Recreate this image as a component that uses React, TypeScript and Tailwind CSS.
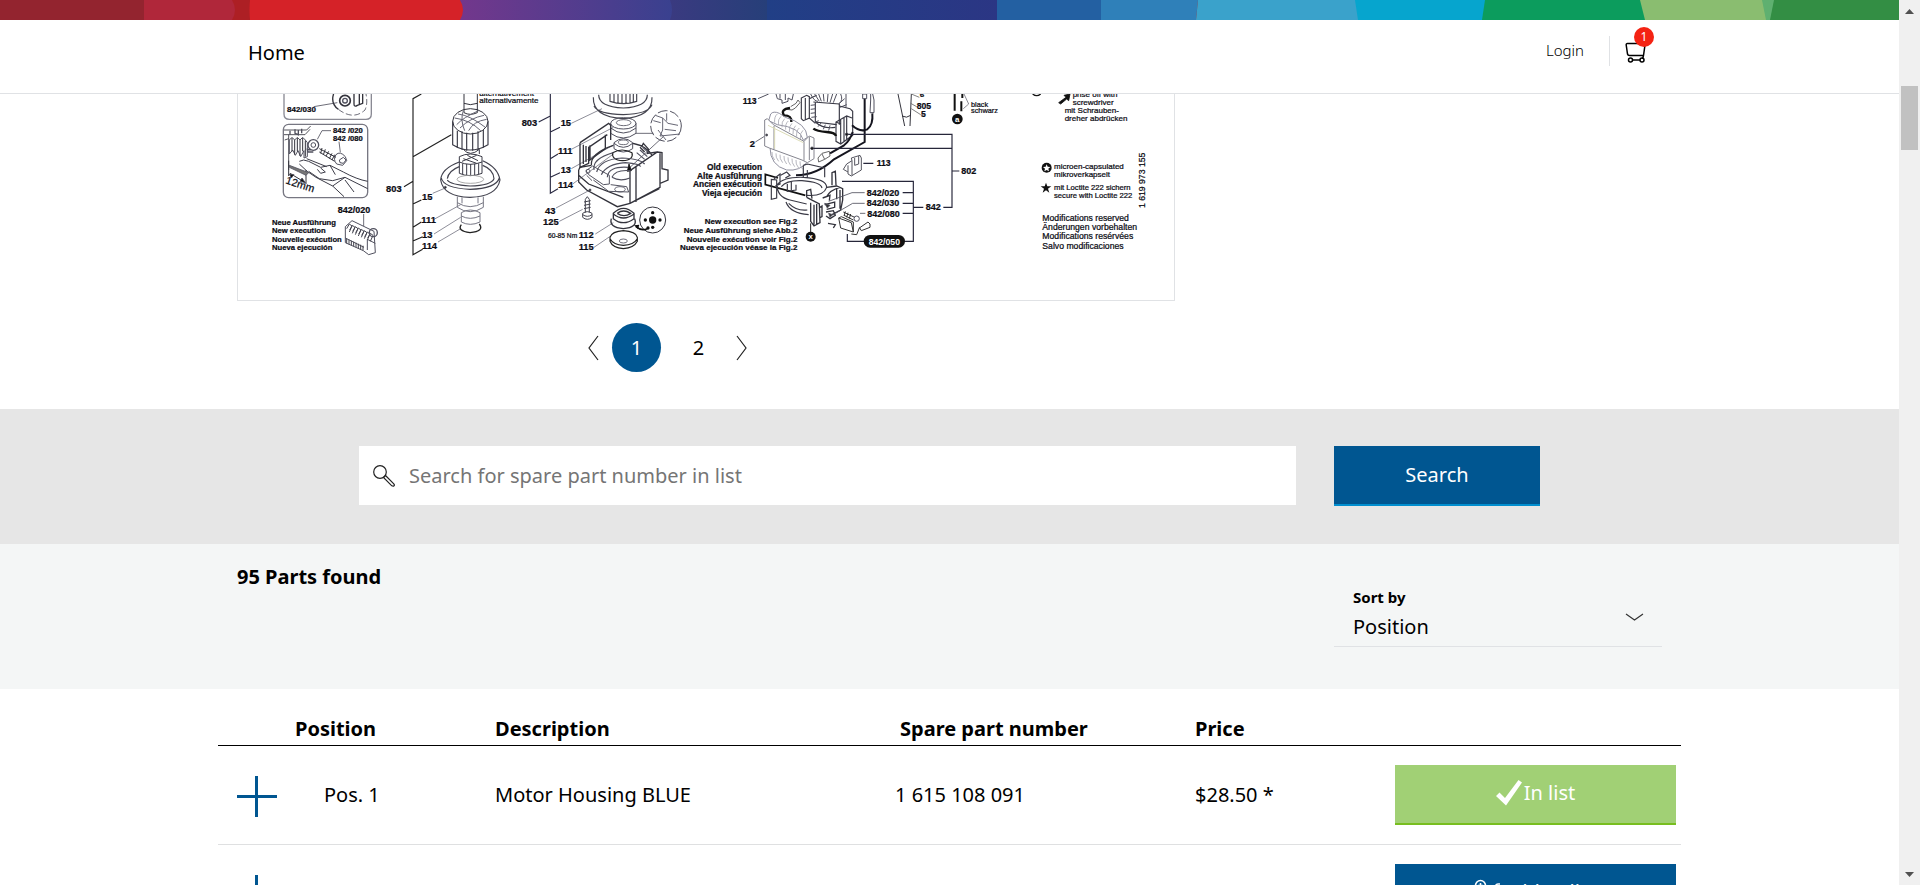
import React from "react";

type Part = {
  position: string;
  description: string;
  number: string;
  price: string;
  inList: boolean;
};

const parts: Part[] = [
  { position: "Pos. 1", description: "Motor Housing BLUE", number: "1 615 108 091", price: "$28.50 *", inList: true },
  { position: "Pos. 2", description: "Rubber", number: "1 614 220 118", price: "$52.10 *", inList: false },
];

function Supergraphic() {
  return (
    <svg className="block h-5 w-full" viewBox="0 0 1899 20" preserveAspectRatio="none" aria-hidden="true">
      <defs>
        <linearGradient id="violet" x1="0" x2="1">
          <stop offset="0" stopColor="#74378c" />
          <stop offset="1" stopColor="#37418f" />
        </linearGradient>
        <linearGradient id="navy" x1="0" x2="1">
          <stop offset="0" stopColor="#3a3a80" />
          <stop offset="1" stopColor="#263f79" />
        </linearGradient>
        <linearGradient id="blue" x1="0" x2="1">
          <stop offset="0" stopColor="#213f86" />
          <stop offset="1" stopColor="#2b3684" />
        </linearGradient>
      </defs>
      <rect width="1899" height="20" fill="#ad1f24" />
      <rect width="144" height="20" fill="#93242f" />
      <path d="M144 0H232Q238 10 232 20H144Z" fill="#b0273a" />
      <path d="M455 0H680V20H455Z" fill="url(#violet)" />
      <path d="M250 0H460Q466 10 460 20H250Q249 10 250 0Z" fill="#d52228" />
      <path d="M670 0H768V20H670Q674 10 670 0Z" fill="url(#navy)" />
      <path d="M767 0H998V20H767Z" fill="url(#blue)" />
      <path d="M997 0H1102V20H997Z" fill="#2360a2" />
      <path d="M1101 0H1198L1196 20H1101Z" fill="#2f80b9" />
      <path d="M1198 0H1360V20H1196Z" fill="#3aa2cb" />
      <path d="M1355 0H1490V20H1358Z" fill="#06a5ce" />
      <path d="M1485 0H1650V20H1482Z" fill="#0c9c5d" />
      <path d="M1640 0H1775V20H1645Z" fill="#8abd70" />
      <path d="M1762 0H1780V20H1766Z" fill="#5fb070" />
      <path d="M1774 0H1899V20H1770Z" fill="#338e44" />
    </svg>
  );
}

function CartIcon() {
  return (
    <svg className="h-[22px] w-[22px]" viewBox="0 0 22 22" fill="none" stroke="#000" strokeWidth="1.5" aria-hidden="true">
      <path d="M21 1.500H2.500Q1 1.500 1.200 3L2.500 12Q2.800 13.500 4.500 13.500H18.500L20 3M18.500 13.500L17.500 17" strokeLinejoin="round" />
      <circle cx="5.500" cy="18" r="2" />
      <circle cx="17" cy="18" r="2" />
      <path d="M7.500 18H15" />
    </svg>
  );
}

function Header() {
  return (
    <header className="relative shrink-0 border-b border-[#e0e2e5] bg-white">
      <Supergraphic />
      <div className="mx-auto flex h-[73px] max-w-[1425px] items-start justify-between pl-[11px] pr-[15px] pt-3">
        <a href="#home" className="mt-1 text-[20px] leading-[34px]">Home</a>
        <div className="flex items-center">
          <a href="#login" className="mr-[25px] mt-0.5 text-[15px] font-light leading-[30px]">Login</a>
          <span className="mt-1 h-[30px] w-px bg-[#e0e2e5]" />
          <a href="#cart" aria-label="Shopping cart, 1 item" className="relative ml-[15px] mt-2 block">
            <CartIcon />
            <span className="absolute -top-[15px] left-[9px] flex h-5 w-5 items-center justify-center rounded-full bg-[#f42313] text-[12px] leading-none text-white">
              1
            </span>
          </a>
        </div>
      </div>
    </header>
  );
}

type LabelProps = { x: number; y: number; children: React.ReactNode; size?: number; bold?: boolean; end?: boolean };

function Label({ x, y, children, size = 24, bold = true, end = false }: LabelProps) {
  return (
    <text
      x={x}
      y={y}
      fontSize={size}
      fontWeight={bold ? 700 : 400}
      textAnchor={end ? "end" : "start"}
      fill="#0c0c14"
      stroke="#0c0c14"
      strokeWidth={0.7}
    >
      {children}
    </text>
  );
}

const coilLines = [0, 1, 2, 3, 4, 5, 6, 7];

function Diagram() {
  return (
    <svg
      className="block w-full"
      viewBox="24 12 2808 618"
      fontFamily="'Liberation Sans', Arial, sans-serif"
      fill="none"
      stroke="#50505e"
      strokeWidth="2.500"
      role="img"
      aria-label="Exploded drawing of the spare parts"
    >
      {/* brush detail boxes and rotor */}
      <g>
        <path d="M162 0V72Q162 88 178 88H408Q424 88 424 72V0" stroke="#8a8a94" strokeWidth="4" />
        <Label x={171} y={66}>842/030</Label>
        <path d="M251 50L322 38" />
        <circle cx="345" cy="32" r="16" strokeWidth="5" stroke="#33333c" />
        <circle cx="345" cy="32" r="7" strokeWidth="4" />
        <path d="M312 8Q300 40 325 58M372 8V42Q372 52 382 46L398 40V8M388 8V42" stroke="#33333c" strokeWidth="4" />
        <path d="M325 58Q370 92 405 60Q414 40 408 12" strokeDasharray="18 8" />

        <rect x="160" y="103" width="253" height="220" rx="16" stroke="#777782" strokeWidth="4" />
        <path d="M162 120H230L242 108M162 134H225L240 118M176 134V240M164 150L176 146" stroke="#33333c" />
        <path d="M180 122V134M195 118V130L205 134V120M215 116V130" strokeWidth="4" />
        <path d="M178 150L186 142L194 150L202 142L210 150L218 142L226 150L232 158V200L222 204V182L212 200L204 182L196 196L188 180L178 192Z" strokeWidth="3" />
        <path d="M186 144V184M194 150V194M202 144V184M210 150V198M218 144V184M226 152V200" stroke="#33333c" strokeWidth="3" />
        <circle cx="250" cy="165" r="16" strokeWidth="4" />
        <circle cx="250" cy="165" r="7" strokeWidth="3" />
        <path d="M242 180L232 178L234 186L250 186" strokeWidth="4" />
        <path d="M262 148L276 122H303M327 155L331 187" />
        <Label x={309} y={130} size={23}>842 /020</Label>
        <Label x={309} y={154} size={23}>842 /080</Label>
        <path d="M268 176L318 202M268 186L314 214M276 174L272 190M286 178L280 194M296 184L288 198M306 190L298 206M314 194L306 210" stroke="#33333c" strokeWidth="3" />
        <path d="M318 194Q330 182 346 200L350 212L338 226L320 222Q308 208 318 194ZM328 210L340 202L348 210L340 220L330 218Z" strokeWidth="3" />
        <path d="M208 214Q220 206 236 214L272 232L300 226L340 246Q380 268 413 274M208 222Q230 246 258 262L308 288L345 262L413 296M230 206L290 230M236 244L268 266L308 272L345 262M300 226L316 254M308 288L342 320M345 270L372 306M262 238L272 250L286 246L272 234" stroke="#3c3c48" strokeWidth="3" />
        <path d="M176 212V258M228 240V282M180 250L226 278" stroke="#33333c" strokeWidth="3" />
        <path d="M178 252L192 254L184 264ZM226 278L210 274L216 264Z" fill="#111" />
        <path d="M178 226L236 248L228 256L178 232Z" fill="#777" />
        <g transform="rotate(18 165 280)"><Label x={165} y={280} size={32} bold={false}>12mm</Label></g>

        <Label x={323} y={370} size={27}>842/020</Label>
        <path d="M401 372V408" />
        <Label x={126} y={405} size={23}>Neue Ausführung</Label>
        <Label x={126} y={430} size={23}>New execution</Label>
        <Label x={126} y={456} size={23}>Nouvelle exécution</Label>
        <Label x={126} y={481} size={23}>Nueva ejecución</Label>
        <path d="M346 410L366 392L432 424L436 488L416 494L400 482L346 458ZM346 444L402 472M412 448L436 460M412 448V480" strokeWidth="3" />
        {coilLines.map((i) => (
          <path key={i} d={`M${350 + i * 9} ${416 + i * 4}l8 -14l8 6l-8 18M${350 + i * 7} ${446 + i * 3}v14`} stroke="#44444f" strokeWidth="3" />
        ))}
        <circle cx="430" cy="428" r="12" strokeWidth="4" />

        <path d="M574 12L549 26V494L578 478M549 200L664 134M549 274L522 290M549 342L574 330M549 412L574 396M549 453L578 440" stroke="#222" strokeWidth="3.500" />
        <path d="M608 310L646 294M612 388L692 344M612 432L692 382M624 456L692 416" stroke="#777784" />
        <Label x={468} y={307} size={28}>803</Label>
        <Label x={576} y={330} size={28}>15</Label>
        <Label x={574} y={398} size={28}>111</Label>
        <Label x={576} y={443} size={28}>13</Label>
        <Label x={576} y={477} size={28}>114</Label>
        <Label x={748} y={18} bold={false} size={24}>alternativement</Label>
        <Label x={748} y={38} bold={false} size={24}>alternativamente</Label>

        <path d="M702 0V68Q720 78 742 68V0M702 40Q720 48 742 40" stroke="#33333c" strokeWidth="3" />
        <ellipse cx="721" cy="94" rx="53" ry="38" stroke="#33333c" strokeWidth="3" />
        <path d="M668 94V164Q720 196 774 164V94M682 122V174M696 124V180M710 128V183M728 128V183M744 124V180M760 120V174" stroke="#3a3a46" strokeWidth="3.500" />
        <path d="M680 104Q700 82 746 62M690 114Q720 84 762 76M716 122Q730 94 770 88M674 84Q720 90 752 122M684 72Q720 76 766 112M700 62Q690 90 704 122" stroke="#666674" strokeWidth="3" />
        <path d="M700 178Q720 202 748 178V192M688 200V250Q720 264 756 250V200Q720 184 688 200ZM688 216Q720 230 756 216M698 220V252M710 222V256M722 222V256M734 222V256M746 220V252M700 206L740 220M712 196L744 212M696 214L740 196" stroke="#3a3a46" strokeWidth="3" />
        <path d="M688 216Q634 236 632 270Q640 320 720 322Q800 320 810 270Q804 232 758 212M634 264Q640 294 720 298Q798 296 808 264M652 270Q660 284 720 288Q784 286 792 266Q790 238 758 226M688 230Q656 242 652 266" stroke="#42424e" strokeWidth="3.500" />
        <ellipse cx="721" cy="268" rx="40" ry="12" stroke="#999" />
        <path d="M682 320V352Q720 378 760 352V320M682 338Q720 362 760 338M696 322V340M744 322V340M694 368V396Q720 410 750 396V368Q720 352 694 368ZM694 378Q720 392 750 378" stroke="#777784" strokeWidth="3" />
        <circle cx="646" cy="292" r="3" fill="#222" />
        <path d="M694 404Q680 422 720 428Q764 424 748 402" stroke="#222" strokeWidth="4" />
      </g>

      {/* gear housing */}
      <g transform="translate(900 0)">
        <Label x={-25} y={108} size={28}>803</Label>
        <path d="M61 0V310L84 296M61 78L26 96M61 126L90 112M61 206L84 192M61 262L90 248" stroke="#2c2c44" strokeWidth="3.500" />
        <path d="M124 100L216 56M124 178L250 112M124 236L252 164M128 282L250 192M78 354L180 300M88 394L158 358M196 432L250 398M192 472L242 438" stroke="#777784" />
        <Label x={92} y={109} size={28}>15</Label>
        <Label x={84} y={191} size={28}>111</Label>
        <Label x={92} y={248} size={28}>13</Label>
        <Label x={84} y={294} size={28}>114</Label>
        <Label x={45} y={371} size={28}>43</Label>
        <Label x={39} y={406} size={28}>125</Label>
        <Label x={54} y={444} size={20} bold={false}>60-85 Nm</Label>
        <Label x={146} y={445} size={28}>112</Label>
        <Label x={146} y={481} size={28}>115</Label>

        <path d="M190 22Q188 82 280 86Q368 80 366 22M192 48Q204 72 280 74Q356 72 366 44M206 14Q206 50 280 54Q352 50 352 14M240 12V34Q280 48 320 34V12M252 12V38M264 12V42M276 12V42M288 12V42M300 12V40M310 12V36" stroke="#44444f" strokeWidth="3.500" />
        <ellipse cx="280" cy="100" rx="38" ry="17" strokeWidth="3" />
        <ellipse cx="281" cy="98" rx="22" ry="9" />
        <path d="M242 100V130Q280 158 318 130V100M242 114Q280 144 318 114" strokeWidth="3" />
        <path d="M252 158V176Q280 196 308 176V158Q280 134 252 158ZM252 160Q280 184 308 160" strokeWidth="3" />
        <ellipse cx="280" cy="157" rx="15" ry="7" />
        <path d="M248 188Q244 210 278 212Q312 210 306 188M248 188Q276 172 306 188" stroke="#222" strokeWidth="3.500" />
        <circle cx="408" cy="108" r="46" strokeDasharray="30 8" strokeWidth="3" />
        <path d="M376 76L398 84V120L390 138M398 84L414 100L444 106M390 138L450 132M410 92V70M404 118L438 122M370 92L392 98M384 120L408 150" stroke="#666674" strokeWidth="3" />
        <path d="M318 130H370M400 140L300 232" />
        <path d="M297 222L292 244L304 242Z" fill="#111" stroke="#111" />
        <path d="M150 158L236 100L242 106V150M150 158V232L176 220V172L232 134M160 164V222M168 168V216M180 166V210L226 176V134" stroke="#33333c" strokeWidth="4" />
        <path d="M146 240L150 232L184 226M146 240V276L170 300L262 350L300 340L390 292V280L414 270V240L396 236V188L382 186L300 242M146 256L176 282L280 322M300 242V340M318 232V336M390 190V290M300 340L388 296M184 226Q180 190 250 166M310 160Q350 168 366 196M308 160L336 168L340 160L356 178L352 190L382 186M330 172L344 186" stroke="#33333c" strokeWidth="4" />
        <path d="M192 240Q186 206 250 188M200 246Q210 208 276 204Q330 206 344 222M214 254Q230 222 286 218Q330 222 332 230M232 262Q234 228 294 232M246 262Q256 238 300 242M246 262Q270 276 300 264M330 180L352 200M320 188L344 208M338 172L358 190" strokeWidth="3.500" />
        <path d="M168 242L188 228L238 256V282L220 284L176 254ZM190 270L236 304L296 306L290 290L242 284M170 256L186 272" stroke="#555562" strokeWidth="3" />
        <ellipse cx="270" cy="298" rx="16" ry="8" />
        <circle cx="174" cy="244" r="6" />
        <circle cx="180" cy="300" r="3" fill="#222" />
        <path d="M166 328L172 320L178 328V368M166 328V368M162 336L182 332M162 346L182 342M162 356L182 352M158 370Q172 360 186 370V382Q172 394 158 382ZM158 374Q172 384 186 374" stroke="#44444f" strokeWidth="3" />
        <path d="M250 370Q280 340 312 370V386Q280 410 250 386ZM250 372Q280 396 312 372M262 370Q280 356 302 370Q282 384 262 370M244 386Q236 412 280 416Q324 412 314 386" stroke="#33333c" strokeWidth="4" />
        <path d="M240 442Q246 424 280 422Q318 424 322 442V454Q312 474 280 476Q248 474 240 454ZM240 446Q250 464 280 466Q312 464 322 446" stroke="#222" strokeWidth="3.500" />
        <ellipse cx="280" cy="453" rx="12" ry="6" />
        <circle cx="368" cy="390" r="39" stroke="#33333c" strokeWidth="3" />
        <g fill="#111" stroke="none">
          <circle cx="368" cy="390" r="11" />
          <circle cx="368" cy="368" r="5" />
          <circle cx="346" cy="390" r="5" />
          <circle cx="390" cy="390" r="5" />
          <circle cx="368" cy="412" r="5" />
          <circle cx="354" cy="414" r="5" />
          <path d="M312 406L328 404L324 418Z" />
        </g>
        <path d="M318 410Q334 424 352 416" stroke="#111" strokeWidth="5" />
      </g>

      {/* field coil and brush holder */}
      <g transform="translate(1380 0)">
        <Label x={158} y={42} size={26}>113</Label>
        <path d="M204 26L236 12M258 12L262 26L276 30V40L294 34V24L306 30L310 12M270 12V26M286 12V30" strokeWidth="3" />
        <Label x={179} y={170} size={28}>2</Label>
        <path d="M196 156L228 136" />
        <path d="M302 50L318 40L324 30L330 38L316 54L306 60L290 58" stroke="#666" strokeWidth="3" />
        <path d="M300 54Q270 58 282 76Q306 76 304 96" stroke="#111" strokeWidth="7" />
        <path d="M334 24L350 16L358 20V84L340 92L334 86ZM346 24V88M358 26L380 16M358 84L376 100M370 36L448 42V104M376 36V96Q400 118 436 112M376 96L440 104" stroke="#3a3a46" strokeWidth="3.500" />
        <path d="M362 12Q372 34 384 34M452 12Q460 30 448 40M468 12V52M374 12L388 34M386 12L394 34M400 12L402 34M414 12L412 36M428 12L420 38M440 12L430 38M464 26L446 42M470 44L450 52M362 46L378 44M362 58L378 56M362 70L378 68M364 82L380 80M372 98L386 92M384 110L394 98M400 118L406 104M416 122L420 106" strokeWidth="3" />
        <path d="M448 48L480 56L488 64V136L452 162L438 154V96L470 78L486 84M470 80V148M462 84V154M452 90V160M438 96L452 102" stroke="#3a3a46" strokeWidth="3.500" />
        <path d="M370 116Q380 124 410 126Q436 128 438 138" stroke="#111" strokeWidth="7" />
        <path d="M524 12V156L432 208Q380 256 318 256M547 70Q550 104 532 118Q510 128 486 106M488 126Q480 152 462 166L420 190" stroke="#15151f" strokeWidth="6" />
        <path d="M518 12H530V26H518ZM542 12V30L540 68H552L552 30L548 12" fill="#fff" strokeWidth="3" />
        <path d="M418 184L396 190L384 204L386 216L404 208L420 198ZM396 192L404 208" stroke="#666" strokeWidth="3" />
        <path d="M624 12L644 108M664 12L660 108M636 78Q650 86 662 76" stroke="#33333c" strokeWidth="3" />
        <path d="M664 12L688 22M662 40L680 50M664 56L692 74" stroke="#666" />
        <Label x={689} y={21} size={24}>6</Label>
        <Label x={680} y={56} size={26}>805</Label>
        <Label x={693} y={80} size={26}>5</Label>
        <path d="M794 12V62M817 12V24M814 34V64" stroke="#111" strokeWidth="6" />
        <path d="M822 12L836 42L820 56" strokeWidth="2" />
        <circle cx="802" cy="87" r="16" fill="#111" stroke="none" />
        <text x="802" y="95" fontSize="24" fontWeight="700" textAnchor="middle" fill="#fff" stroke="none">a</text>

        <path d="M240 172Q240 226 290 240Q330 244 352 216M236 92L242 72Q250 62 268 70L286 82Q350 100 352 142L340 150Q330 112 262 104Z" stroke="#9090a0" strokeWidth="3" />
        {coilLines.map((i) => (
          <path key={i} d={`M${262 + i * 11} ${72 + i * 7}q-10 8 -8 26M${246 + i * 12} ${186 + i * 4}q-2 12 8 24`} stroke="#a8a8b2" strokeWidth="2.500" />
        ))}
        <path d="M224 90L232 86L250 104L342 154L358 138L372 144V206L352 218L336 210L238 174L224 168ZM358 140V210M342 154V212M252 108V178" fill="#fff" stroke="#85858f" strokeWidth="3" />
        <path d="M234 106L340 158M254 112V176" stroke="#dcdcb8" strokeWidth="3" />
        <circle cx="230" cy="135" r="3" fill="#333" />

        <Label x={216} y={239} size={25} end>Old execution</Label>
        <Label x={216} y={266} size={25} end>Alte Ausführung</Label>
        <Label x={216} y={292} size={25} end>Ancien exécution</Label>
        <Label x={216} y={319} size={25} end>Vieja ejecución</Label>
        <Label x={322} y={403} size={24} end>New execution see Fig.2</Label>
        <Label x={322} y={429} size={24} end>Neue Ausführung siehe Abb.2</Label>
        <Label x={322} y={455} size={24} end>Nouvelle exécution voir Fig.2</Label>
        <Label x={322} y={481} size={24} end>Nueva ejecución véase la Fig.2</Label>
        <path d="M264 264L226 253V284L346 316" stroke="#111" strokeWidth="5" />
        <path d="M252 266L270 252V282L256 288M244 268V328L260 324V270ZM272 256L290 246L300 256L286 264M262 284Q280 260 340 262Q410 266 410 292Q400 320 350 316M262 284Q260 320 300 330L350 342M274 290Q290 270 336 272Q392 276 396 294M292 282V304L318 300V284M304 276V300M288 336Q300 370 356 374M296 340Q320 364 352 360M340 226V262M352 222L404 234V262M340 226L352 222M352 262V240" stroke="#3a3a46" strokeWidth="3.500" />
        <path d="M350 322V302L362 298L366 326M350 322L388 342L390 398L372 408L362 394V338M372 344V404M380 342V402M390 352L396 348V380L388 384M410 292L440 288L458 296V330L452 360L426 374M426 286V248L436 244L438 286M410 320Q420 300 450 292M398 324L420 316L418 332M404 344L434 336V352L410 358M408 366L430 362L436 376L420 386L408 378M414 400L436 404L430 414M440 296V328M450 300V356" stroke="#33333c" strokeWidth="4" />
        <path d="M404 340L420 346L412 354ZM416 370L428 374L420 382Z" fill="#333" />
        <path d="M362 400V426" stroke="#222" strokeWidth="3" />
        <circle cx="362" cy="440" r="15" fill="#111" stroke="none" />
        <text x="362" y="447" fontSize="23" fontWeight="700" textAnchor="middle" fill="#fff" stroke="none">x</text>
        <path d="M460 366L494 382M462 376L490 390M466 364L462 378M474 368L470 382M482 372L478 386" stroke="#333" strokeWidth="3" />
        <circle cx="500" cy="386" r="8" strokeWidth="3" />
        <path d="M446 384L484 398L490 426L452 414ZM446 384L454 380L490 396V426M484 432L500 434L508 414L534 396L540 402V412L514 422L508 412" stroke="#333" strokeWidth="3" />
        <path d="M460 238L470 222L486 212L484 204L510 196L514 204V240L484 258L474 252V226M486 212V256M494 204V226L506 222V198M460 238L474 246" stroke="#55555f" strokeWidth="3" />
        <path d="M520 220H550M470 133H786V352H760M366 175H786M786 243H808M456 274H670V454H640M638 308H670M638 340H670M638 370H670M670 352H700M472 432V454H526" stroke="#26263a" strokeWidth="3.500" />
        <path d="M524 308H486L416 334M524 340H488L436 370M526 370H510" />
        <circle cx="470" cy="133" r="4" fill="#111" />
        <circle cx="366" cy="175" r="4" fill="#111" />
        <Label x={560} y={229} size={26}>113</Label>
        <Label x={814} y={252} size={27}>802</Label>
        <Label x={530} y={318} size={27}>842/020</Label>
        <Label x={530} y={349} size={27}>842/030</Label>
        <Label x={532} y={380} size={27}>842/080</Label>
        <Label x={707} y={361} size={27}>842</Label>
        <rect x="521" y="435" width="124" height="38" rx="19" fill="#111" stroke="none" />
        <text x="583" y="464" fontSize="26" fontWeight="700" textAnchor="middle" fill="#fff" stroke="none">842/050</text>
      </g>

      {/* legend */}
      <g transform="translate(2190 0)">
        <Label x={33} y={50} size={22} bold={false}>black</Label>
        <Label x={33} y={70} size={22} bold={false}>schwarz</Label>
        <path d="M218 12Q230 22 242 12" stroke="#111" strokeWidth="4" />
        <path d="M296 38L318 22L312 16L330 12L326 32L320 27L302 42Z" fill="#111" stroke="#111" />
        <Label x={338} y={22} size={24} bold={false}>prise off with</Label>
        <Label x={338} y={46} size={24} bold={false}>screwdriver</Label>
        <Label x={314} y={70} size={24} bold={false}>mit Schrauben-</Label>
        <Label x={314} y={94} size={24} bold={false}>dreher abdrücken</Label>
        <circle cx="260" cy="233" r="15" fill="#111" stroke="none" />
        <path d="M260 223l3 7 8 1-6 5 2 8-7-4-7 4 2-8-6-5 8-1z" fill="#fff" stroke="none" />
        <path d="M258 278l4 11 12 0-10 7 4 12-10-7-10 7 4-12-10-7 12 0z" fill="#111" stroke="none" />
        <Label x={282} y={237} size={24} bold={false}>microen-capsulated</Label>
        <Label x={282} y={260} size={24} bold={false}>mikroverkapselt</Label>
        <Label x={282} y={301} size={23} bold={false}>mit Loctite 222 sichern</Label>
        <Label x={282} y={325} size={23} bold={false}>secure with Loctite 222</Label>
        <Label x={247} y={392} size={26} bold={false}>Modifications reserved</Label>
        <Label x={247} y={420} size={26} bold={false}>Änderungen vorbehalten</Label>
        <Label x={247} y={448} size={26} bold={false}>Modifications resérvées</Label>
        <Label x={247} y={477} size={26} bold={false}>Salvo modificaciones</Label>
        <g transform="rotate(-90 554 354)"><Label x={554} y={354} size={26} bold={false}>1 619 973 155</Label></g>
      </g>
    </svg>
  );
}

function Chevron({ flip = false }: { flip?: boolean }) {
  return (
    <svg className="h-[26px] w-[11px]" viewBox="0 0 11 26" fill="none" stroke="#222" strokeWidth="1.200" aria-hidden="true">
      <path d={flip ? "M1 1L10 13L1 25" : "M10 1L1 13L10 25"} />
    </svg>
  );
}

function Pagination() {
  return (
    <nav aria-label="Drawings" className="flex items-center gap-[13px] pb-[37px] pl-[351px] pt-[22px] text-[20px]">
      <button type="button" aria-label="Previous"><Chevron /></button>
      <button type="button" className="h-[49px] w-[49px] rounded-full bg-[#005691] text-white">1</button>
      <button type="button" className="h-[49px] w-[49px] rounded-full">2</button>
      <button type="button" aria-label="Next"><Chevron flip /></button>
    </nav>
  );
}

function SearchBar() {
  return (
    <section className="bg-[#e6e6e6] pb-[38px] pt-[37px]">
      <form className="mx-auto flex max-w-[1181px] items-start gap-[38px]">
        <label className="flex h-[59px] flex-1 items-center bg-white pl-[14px]">
          <svg className="h-[22px] w-[22px] shrink-0" viewBox="0 0 22 22" fill="none" stroke="#222" strokeWidth="1.200" aria-hidden="true">
            <circle cx="7" cy="7" r="6.300" />
            <path d="M12.500 10.500L20.800 18.800Q21.800 20 21 20.800T18.800 20.800L10.500 12.500Z" />
          </svg>
          <input
            type="search"
            aria-label="Search for spare part number in list"
            placeholder="Search for spare part number in list"
            className="ml-[14px] h-full w-full bg-transparent text-[20px] outline-none placeholder:text-[#757575]"
          />
        </label>
        <button type="button" className="h-[60px] w-[206px] border-b-2 border-[#008ecf] bg-[#005691] text-[20px] text-white">
          Search
        </button>
      </form>
    </section>
  );
}

function ResultBar() {
  return (
    <section className="bg-[#f4f6f6] pb-[42px] pt-[18px]">
      <div className="mx-auto flex max-w-[1425px] items-start justify-between">
        <h2 className="text-[20px] font-bold leading-[30px]">95 Parts found</h2>
        <div className="relative mt-[23px] w-[328px] border-b border-[#e0e2e5] pb-0.5">
          <label htmlFor="sort" className="block pl-[19px] text-[15px] font-bold leading-6">Sort by</label>
          <select id="sort" className="block h-[35px] w-full appearance-none bg-transparent pl-[19px] text-[20px] leading-[35px] outline-none">
            <option>Position</option>
            <option>Description</option>
            <option>Price</option>
          </select>
          <svg className="pointer-events-none absolute right-[18px] top-7 h-2 w-[19px]" viewBox="0 0 19 8" fill="none" stroke="#333" strokeWidth="1.200" aria-hidden="true">
            <path d="M1 1L9.500 7L18 1" />
          </svg>
        </div>
      </div>
    </section>
  );
}

function ListButton({ inList }: { inList: boolean }) {
  if (inList) {
    return (
      <button type="button" className="flex h-[60px] w-[281px] items-center justify-center gap-0.5 border-b-2 border-[#78be20] bg-[#a1d075] pb-0.5 text-[20px] text-white">
        <svg className="h-[26px] w-[26px]" viewBox="0 0 26 26" aria-hidden="true">
          <path d="M0 16L3.500 12.500L9 18L22.500 0L26 2.500L10 25.500Z" fill="#fff" />
        </svg>
        In list
      </button>
    );
  }
  return (
    <button type="button" className="flex h-[60px] w-[281px] items-center justify-center gap-0.5 border-b-2 border-[#008ecf] bg-[#005691] pb-0.5 text-[20px] text-white">
      <svg className="h-[26px] w-[26px]" viewBox="0 0 26 26" fill="none" stroke="#fff" strokeWidth="1.600" aria-hidden="true">
        <circle cx="6.500" cy="6.500" r="5" />
        <path d="M6.500 4V9M4 6.500H9M26 5H24Q22 5 21.500 7L19 19H6L4 13M13 9H21" />
        <circle cx="8" cy="23" r="1.800" />
        <circle cx="17" cy="23" r="1.800" />
      </svg>
      Add to list
    </button>
  );
}

function PartsTable() {
  return (
    <div className="mx-auto max-w-[1463px] pt-6">
      <table className="w-full table-fixed border-collapse text-left text-[20px]">
        <thead>
          <tr className="h-8 border-b border-black leading-[30px]">
            <th className="w-[77px]"><span className="sr-only">Details</span></th>
            <th className="w-[200px]">Position</th>
            <th className="w-[400px]">Description</th>
            <th className="w-[300px] pl-[5px]">Spare part number</th>
            <th className="w-[200px]">Price</th>
            <th><span className="sr-only">Action</span></th>
          </tr>
        </thead>
        <tbody>
          {parts.map((part) => (
            <tr key={part.position} className="h-[99px] border-b border-[#dfe0e1]">
              <td className="pl-[19px]">
                <button type="button" aria-label="Show details" className="block">
                  <svg className="mt-1 h-[41px] w-10" viewBox="0 0 40 41" stroke="#005691" strokeWidth="3" aria-hidden="true">
                    <path d="M0 20.500H40M19.500 0V41" />
                  </svg>
                </button>
              </td>
              <td className="pl-[29px]">{part.position}</td>
              <td>{part.description}</td>
              <td>{part.number}</td>
              <td>{part.price}</td>
              <td><ListButton inList={part.inList} /></td>
            </tr>
          ))}
        </tbody>
      </table>
    </div>
  );
}

function Scrollbar() {
  return (
    <div aria-hidden="true" className="flex w-[21px] shrink-0 flex-col items-center bg-[#f0f0f0] pb-2 pt-[9px]">
      <svg className="h-[5px] w-[9px]" viewBox="0 0 9 5"><path d="M4.500 0L9 5H0Z" fill="#505050" /></svg>
      <span className="mt-[72px] h-16 w-[17px] bg-[#c1c1c1]" />
      <svg className="mt-auto h-[5px] w-[9px]" viewBox="0 0 9 5"><path d="M0 0H9L4.500 5Z" fill="#505050" /></svg>
    </div>
  );
}

export default function App() {
  return (
    <div className="flex h-screen overflow-hidden bg-white font-['Noto_Sans',sans-serif] text-black">
      <div className="flex min-w-0 flex-1 flex-col">
        <Header />
        <main className="min-h-0 flex-1 overflow-hidden">
          <div className="mx-auto max-w-[1425px]">
            <figure className="w-[938px] border border-t-0 border-[#e0e2e5]">
              <Diagram />
            </figure>
            <Pagination />
          </div>
          <SearchBar />
          <ResultBar />
          <PartsTable />
        </main>
      </div>
      <Scrollbar />
    </div>
  );
}
